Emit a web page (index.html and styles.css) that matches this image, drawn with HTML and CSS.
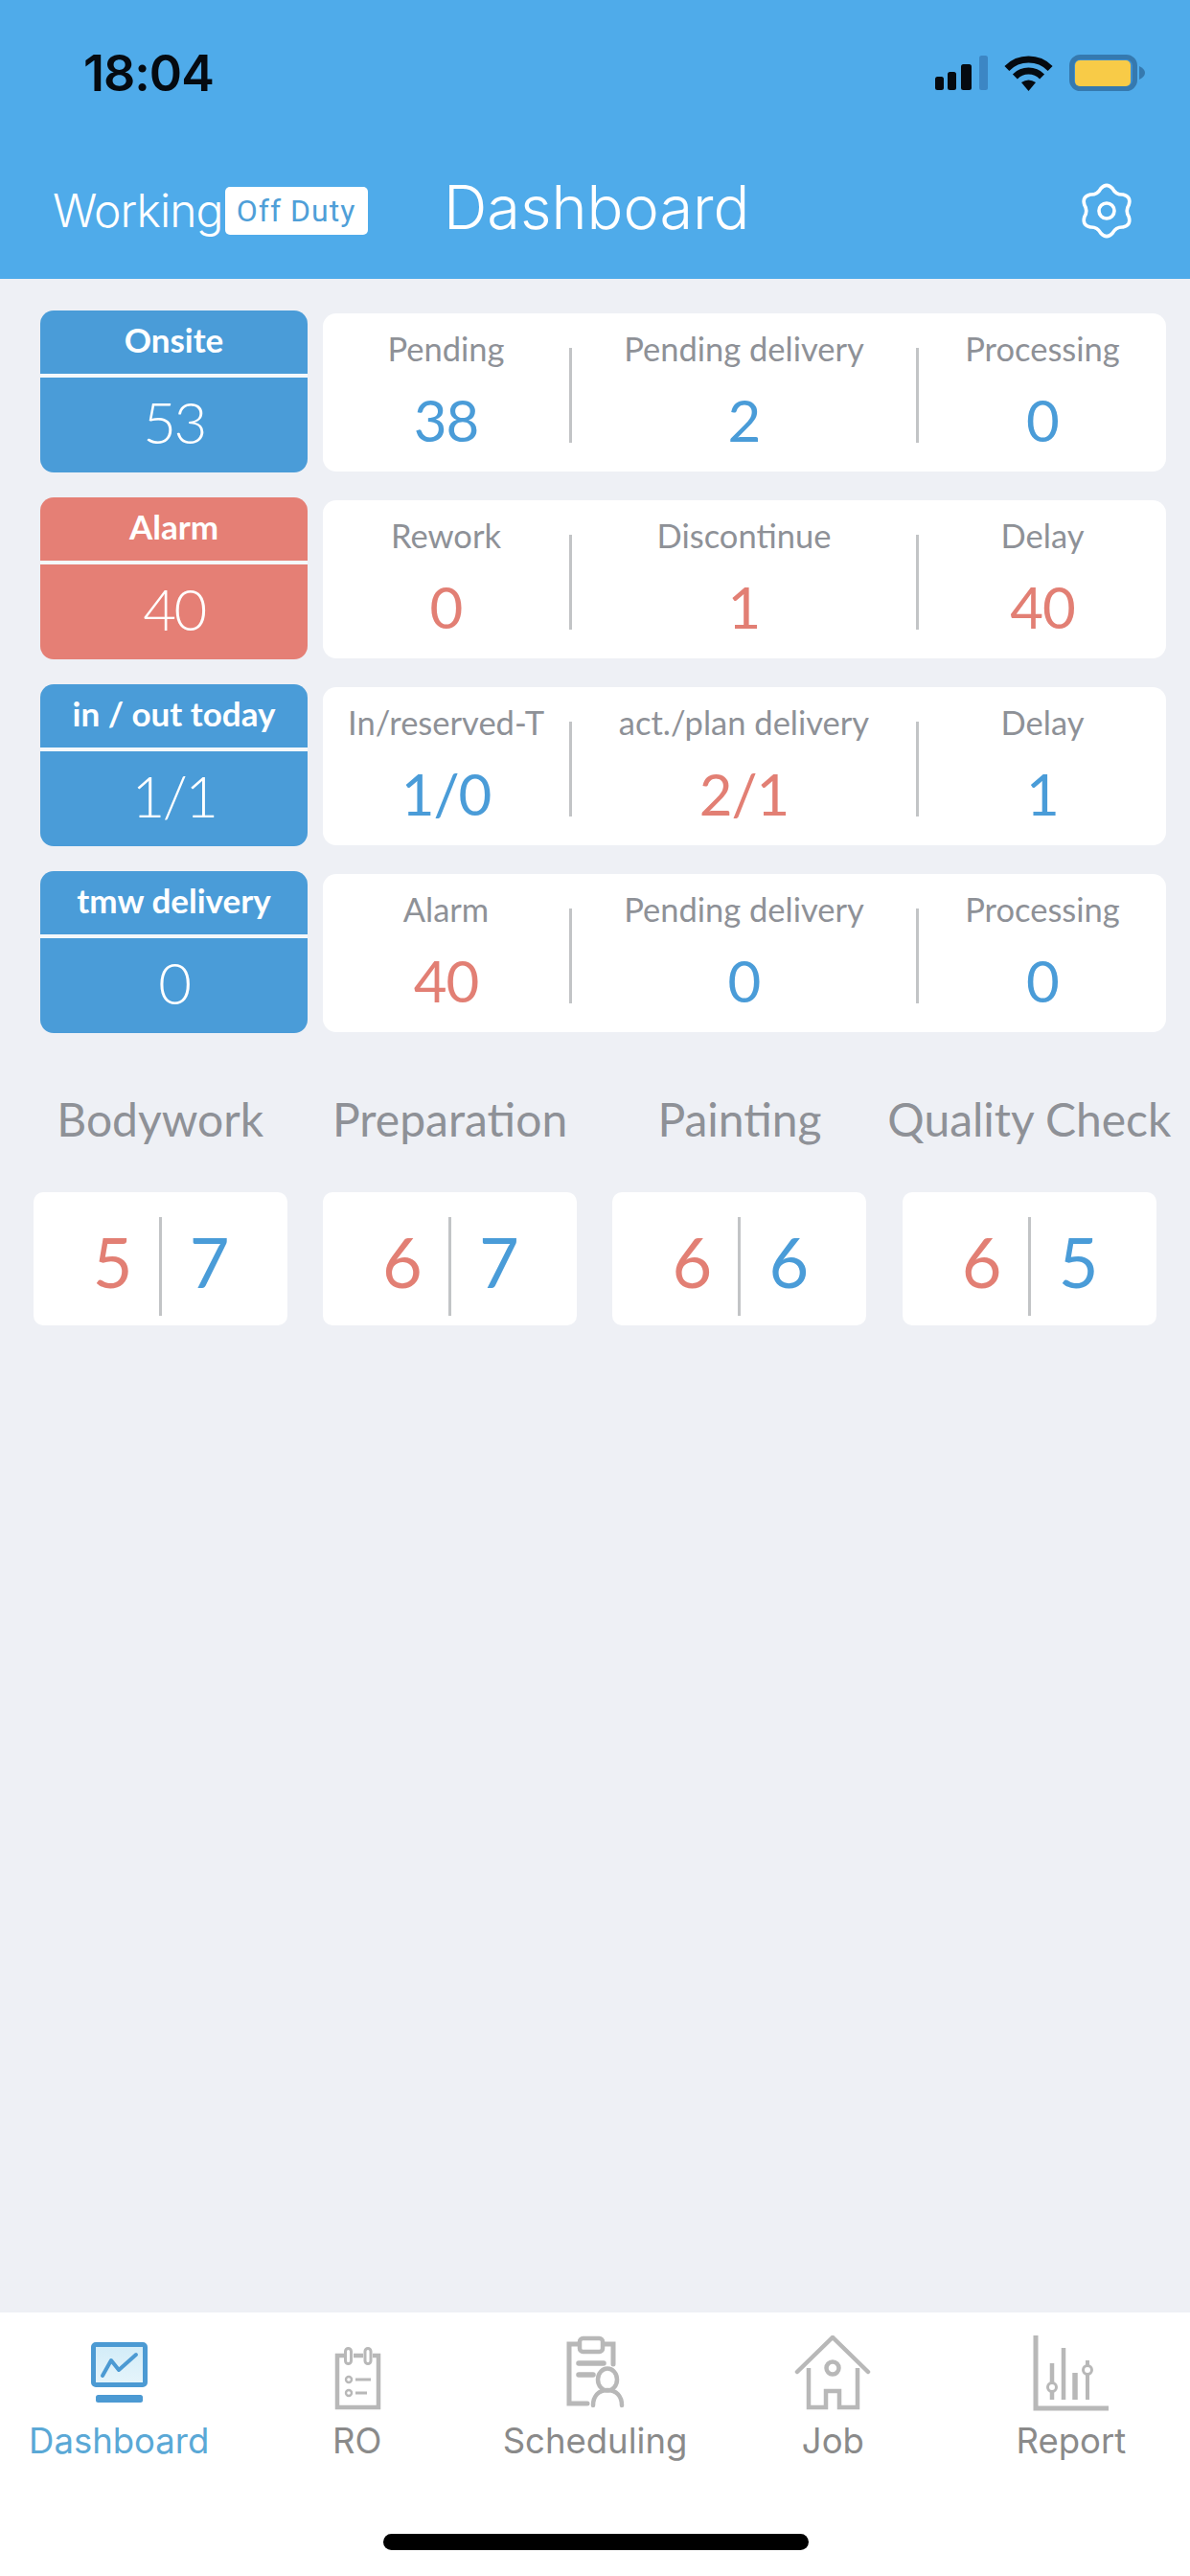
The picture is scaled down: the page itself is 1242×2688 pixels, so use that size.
FILE: index.html
```html
<!DOCTYPE html>
<html lang="en">
<head>
<meta charset="utf-8">
<title>Dashboard</title>
<link rel="stylesheet" href="styles.css">
</head>
<body>
<div class="app">
  <header class="header">
    <div class="status-bar">
      <span class="time">18:04</span>
      <div class="status-icons">
        <svg class="ic-signal" viewBox="0 0 55 37"><rect x="0" y="22" width="9" height="14" rx="2.5" fill="#050a10"/><rect x="13" y="17" width="9" height="19" rx="2.5" fill="#050a10"/><rect x="27" y="9" width="11" height="27" rx="2.5" fill="#050a10"/><rect x="46" y="0" width="9" height="36" rx="2.5" fill="#3c86c4"/></svg>
        <svg class="ic-wifi" viewBox="0 0 53 37"><path d="M3.9 13.4A32 32 0 0 1 49.1 13.4" fill="none" stroke="#050a10" stroke-width="7"/><path d="M12.4 21.9A20 20 0 0 1 40.6 21.9" fill="none" stroke="#050a10" stroke-width="7"/><path d="M26.5 37L19 28Q26.5 23 34 28Z" fill="#050a10"/></svg>
        <svg class="ic-battery" viewBox="0 0 79 38"><rect x="2.5" y="2.5" width="66" height="33" rx="9" fill="#3f8fcf" stroke="#3579af" stroke-width="5"/><rect x="6" y="6" width="58" height="27" rx="5" fill="#f8cb47"/><path d="M73 12Q79 15 79 19Q79 23 73 26Z" fill="#3579af"/></svg>
      </div>
    </div>
    <div class="title-bar">
      <div class="duty">
        <span class="duty-label">Working</span>
        <span class="duty-badge">Off Duty</span>
      </div>
      <h1 class="page-title">Dashboard</h1>
      <svg class="ic-gear" viewBox="0 0 58 54"><path d="M23.2 5.3Q29 -1 34.8 5.3Q38 11.4 44.9 11.1Q53.2 13 50.7 21.2Q47 27 50.7 32.8Q53.2 41 44.9 42.9Q38 42.6 34.8 48.7Q29 55 23.2 48.7Q20 42.6 13.1 42.9Q4.8 41 7.3 32.8Q11 27 7.3 21.2Q4.8 13 13.1 11.1Q20 11.4 23.2 5.3Z" fill="none" stroke="#fff" stroke-width="3.4"/><circle cx="29" cy="27" r="7.5" fill="none" stroke="#fff" stroke-width="3.4"/></svg>
    </div>
  </header>

  <main class="main">
    <section class="summary">
      <div class="row">
        <div class="tile blue"><div class="tile-head">Onsite</div><div class="tile-value">53</div></div>
        <div class="stats">
          <div class="stat"><span class="stat-label">Pending</span><span class="stat-value c-blue">38</span></div>
          <div class="stat sep"><span class="stat-label">Pending delivery</span><span class="stat-value c-blue">2</span></div>
          <div class="stat sep"><span class="stat-label">Processing</span><span class="stat-value c-blue">0</span></div>
        </div>
      </div>
      <div class="row">
        <div class="tile red"><div class="tile-head">Alarm</div><div class="tile-value">40</div></div>
        <div class="stats">
          <div class="stat"><span class="stat-label">Rework</span><span class="stat-value c-red">0</span></div>
          <div class="stat sep"><span class="stat-label">Discontinue</span><span class="stat-value c-red">1</span></div>
          <div class="stat sep"><span class="stat-label">Delay</span><span class="stat-value c-red">40</span></div>
        </div>
      </div>
      <div class="row">
        <div class="tile blue"><div class="tile-head">in / out today</div><div class="tile-value">1/1</div></div>
        <div class="stats">
          <div class="stat"><span class="stat-label">In/reserved-T</span><span class="stat-value c-blue">1/0</span></div>
          <div class="stat sep"><span class="stat-label">act./plan delivery</span><span class="stat-value c-red">2/1</span></div>
          <div class="stat sep"><span class="stat-label">Delay</span><span class="stat-value c-blue">1</span></div>
        </div>
      </div>
      <div class="row">
        <div class="tile blue"><div class="tile-head">tmw delivery</div><div class="tile-value">0</div></div>
        <div class="stats">
          <div class="stat"><span class="stat-label">Alarm</span><span class="stat-value c-red">40</span></div>
          <div class="stat sep"><span class="stat-label">Pending delivery</span><span class="stat-value c-blue">0</span></div>
          <div class="stat sep"><span class="stat-label">Processing</span><span class="stat-value c-blue">0</span></div>
        </div>
      </div>
    </section>

    <section class="stages">
      <div class="stage"><div class="stage-name">Bodywork</div><div class="stage-box"><span class="stage-num c-red">5</span><i class="stage-sep"></i><span class="stage-num c-blue">7</span></div></div>
      <div class="stage"><div class="stage-name">Preparation</div><div class="stage-box"><span class="stage-num c-red">6</span><i class="stage-sep"></i><span class="stage-num c-blue">7</span></div></div>
      <div class="stage"><div class="stage-name">Painting</div><div class="stage-box"><span class="stage-num c-red">6</span><i class="stage-sep"></i><span class="stage-num c-blue">6</span></div></div>
      <div class="stage"><div class="stage-name">Quality Check</div><div class="stage-box"><span class="stage-num c-red">6</span><i class="stage-sep"></i><span class="stage-num c-blue">5</span></div></div>
    </section>
  </main>

  <footer class="tabbar">
    <nav class="tabs">
      <div class="tab active">
        <svg class="tab-icon" viewBox="0 0 80 80"><defs><linearGradient id="screen" x1="0" y1="0" x2="0" y2="1"><stop offset="0" stop-color="#d2ecf8"/><stop offset="1" stop-color="#e6f5fb"/></linearGradient></defs><rect x="13.5" y="9.5" width="54" height="42" rx="2.5" fill="url(#screen)" stroke="#4c9ad3" stroke-width="5"/><path d="M23 42L32 26L40 36L58 20" fill="none" stroke="#4c9ad3" stroke-width="4" stroke-linecap="round" stroke-linejoin="round"/><rect x="16" y="62" width="49" height="8" rx="2.5" fill="#4c9ad3"/></svg>
        <span class="tab-label">Dashboard</span>
      </div>
      <div class="tab">
        <svg class="tab-icon" viewBox="0 0 80 80"><g fill="none" stroke="#b8b8b8"><path d="M26 21H19V75H62V21H56M36 21H46" stroke-width="4.5"/><rect x="27.5" y="13.5" width="6" height="16" rx="3" stroke-width="3"/><rect x="48" y="13.5" width="6" height="16" rx="3" stroke-width="3"/><circle cx="31" cy="46" r="3" stroke-width="2.4"/><circle cx="31" cy="60" r="3" stroke-width="2.4"/><path d="M38 46H54M38 60H50" stroke-width="3"/></g></svg>
        <span class="tab-label">RO</span>
      </div>
      <div class="tab">
        <svg class="tab-icon" viewBox="0 0 80 80"><g fill="none" stroke="#b8b8b8" stroke-linecap="round"><path d="M23 9H13V71H32M49 9H59V30" stroke-width="5"/><rect x="24" y="3" width="24" height="14" rx="3.5" stroke-width="4.5"/><path d="M23 29H49M23 41H38" stroke-width="5.5"/><ellipse cx="53" cy="46" rx="10" ry="11.5" stroke-width="4.5"/><path d="M38 73C38 63 44 57 53 57C62 57 68 63 68 73" stroke-width="4.5"/></g></svg>
        <span class="tab-label">Scheduling</span>
      </div>
      <div class="tab">
        <svg class="tab-icon" viewBox="0 0 80 80"><g fill="none" stroke="#b8b8b8" stroke-width="4.5"><path d="M3 38L40 2L77 38" stroke-linecap="round" stroke-linejoin="miter"/><path d="M15 34V75H33V58H47V75H66V34"/><circle cx="40" cy="34" r="6.5"/></g></svg>
        <span class="tab-label">Job</span>
      </div>
      <div class="tab">
        <svg class="tab-icon" viewBox="0 0 80 80"><g fill="none" stroke="#b8b8b8"><path d="M3 0V76H79" stroke-width="5"/><path d="M20 29V67M32 13V67" stroke-width="4.5"/><path d="M44 39V67" stroke-width="5.5"/><path d="M57 26V67" stroke-width="4"/><circle cx="20" cy="54" r="4.5" fill="#fff" stroke-width="3"/><circle cx="57" cy="36" r="4.5" fill="#fff" stroke-width="3"/></g></svg>
        <span class="tab-label">Report</span>
      </div>
    </nav>
    <div class="home-indicator"></div>
  </footer>
</div>
</body>
</html>
```

FILE: styles.css
```css
* { box-sizing: border-box; }
html, body { margin: 0; padding: 0; }
body { width: 1242px; height: 2688px; overflow: hidden; background: #eef0f5; font-family: "Lato", "Liberation Sans", sans-serif; }
.app { display: flex; flex-direction: column; height: 2688px; }

/* header */
.header { height: 291px; background: #4fabea; color: #fff; font-family: "Inter", "Liberation Sans", sans-serif; }
.status-bar { height: 152px; display: flex; align-items: center; justify-content: space-between; padding: 0 47px 0 87px; }
.time { font-size: 52px; font-weight: 600; color: #050a10; letter-spacing: -1px; }
.status-icons { display: flex; align-items: center; gap: 16px; }
.ic-signal { width: 55px; height: 37px; }
.ic-wifi { width: 53px; height: 37px; }
.ic-battery { width: 79px; height: 38px; }
.title-bar { height: 139px; padding: 0 56px 8px 55px; display: grid; grid-template-columns: 408px auto 1fr; align-items: center; }
.duty { display: flex; align-items: center; gap: 2px; margin-top: 4px; }
.duty-label { font-size: 48px; font-weight: 300; letter-spacing: -0.9px; }
.duty-badge { width: 149px; height: 50px; display: flex; align-items: center; justify-content: center; background: #fff; border-radius: 5px; color: #4f9fd8; font-family: "Roboto", sans-serif; font-size: 32px; letter-spacing: 1px; }
.page-title { margin: -3px 0 0; font-size: 63px; font-weight: 300; line-height: 1; }
.ic-gear { justify-self: end; width: 62px; height: 58px; margin-top: 5px; }

/* summary rows */
.main { flex: 1; padding: 33px 16px 0; }
.summary { display: flex; flex-direction: column; gap: 26px; padding: 0 9px 0 26px; }
.row { display: grid; grid-template-columns: 279px 1fr; column-gap: 16px; align-items: center; height: 169px; }
.tile { height: 169px; border-radius: 14px; color: #fff; display: grid; grid-template-rows: 70px 1fr; overflow: hidden; }
.tile.blue { background: #4a9cd8; }
.tile.red { background: #e57f75; }
.tile-head { display: flex; align-items: center; justify-content: center; border-bottom: 4px solid #f4f8fb; font-size: 35px; font-weight: 700; height: 70px; padding-bottom: 6px; }
.tile-value { display: flex; align-items: center; justify-content: center; font-size: 60px; font-weight: 300; letter-spacing: -2.5px; padding-bottom: 7px; }
.stats { height: 165px; margin-top: 1px; background: #fff; border-radius: 14px; display: grid; grid-template-columns: 257px 362px 1fr; align-items: center; }
.stat { height: 99px; margin-top: 6px; display: flex; flex-direction: column; align-items: center; justify-content: space-between; }
.stat.sep { border-left: 3px solid #c2c4c6; }
.stat-label { font-size: 34.5px; color: #8e9197; line-height: 1; margin-top: -16px; }
.stat-value { font-size: 60px; line-height: 1; letter-spacing: -1px; margin-bottom: -6px; }
.c-blue { color: #4a9cd8; }
.c-red { color: #e27f74; }

/* stage cards */
.stages { display: grid; grid-template-columns: repeat(4, 302.4px); margin-top: 60px; }
.stage { display: flex; flex-direction: column; align-items: center; }
.stage-name { height: 60px; font-size: 48px; line-height: 60px; color: #8e9197; white-space: nowrap; }
.stage-box { margin-top: 46px; width: 265px; height: 139px; background: #fff; border-radius: 10px; display: flex; align-items: center; justify-content: center; gap: 29px; }
.stage-num { font-size: 72px; line-height: 1; width: 40px; text-align: center; margin-top: 4px; }
.stage-sep { width: 3px; height: 103px; background: #c2c4c6; margin-top: 16px; }

/* tab bar */
.tabbar { height: 275px; background: #fff; font-family: "Inter", "Liberation Sans", sans-serif; padding-top: 24px; }
.tabs { display: grid; grid-template-columns: repeat(5, 1fr); }
.tab { display: flex; flex-direction: column; align-items: center; color: #8a8a8a; }
.tab.active { color: #5aa8d6; }
.tab-icon { width: 80px; height: 80px; }
.tab-label { margin-top: 9px; font-size: 36.5px; line-height: 42px; }
.home-indicator { width: 444px; height: 17px; margin: 76px 0 0 400px; border-radius: 9px; background: #000; }
```
